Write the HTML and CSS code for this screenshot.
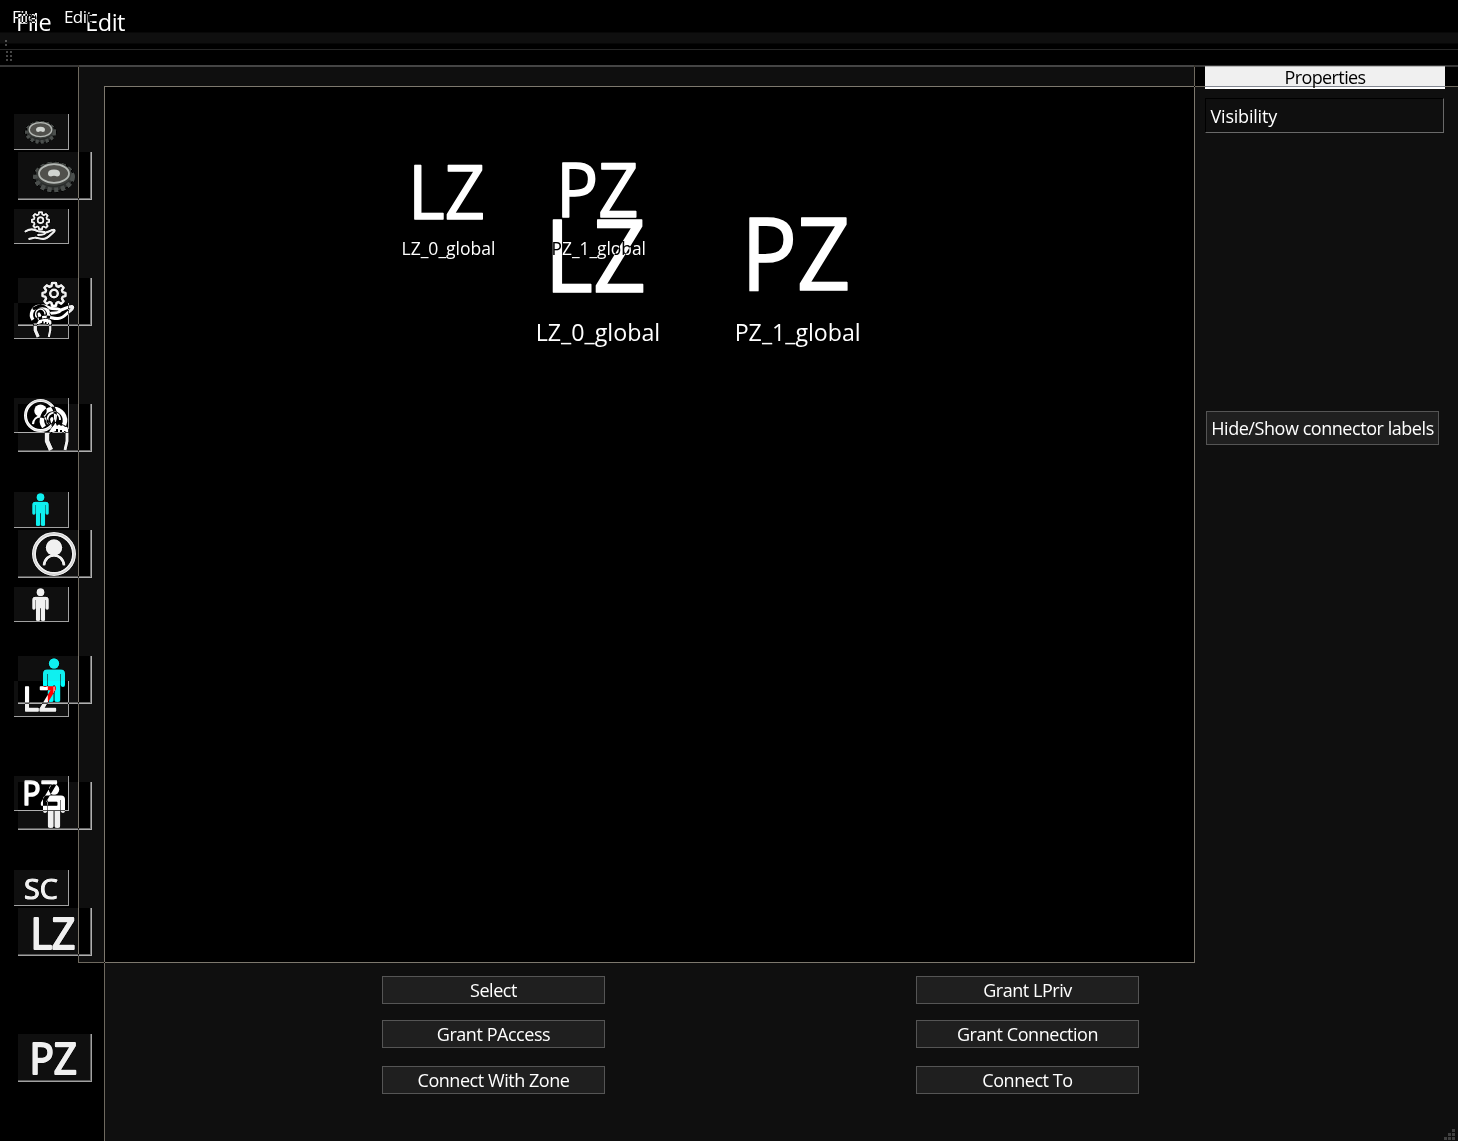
FILE: index.html
```html
<!DOCTYPE html>
<html lang="en">
<head>
<meta charset="utf-8">
<title>Zone Editor</title>
<link rel="stylesheet" href="styles.css">
</head>
<body>
<svg class="defs" aria-hidden="true">
  <symbol id="cog" viewBox="0 0 44 44">
    <ellipse cx="22" cy="23" rx="17" ry="11.500" fill="#303332" stroke="#3c3f3e" stroke-width="4"/>
    <ellipse cx="22" cy="23" rx="18.500" ry="13" fill="none" stroke="#5a5e5c" stroke-width="5" stroke-dasharray="4.200 2.600"/>
    <ellipse cx="22" cy="20" rx="16" ry="10.500" fill="#4c4c48" stroke="#4c4f4c" stroke-width="2.500"/>
    <ellipse cx="22" cy="19.500" rx="15" ry="9.300" fill="#5f5f5b" stroke="#c4c8c4" stroke-width="1.800"/>
    <path d="M16 19.500q0-4 6-4t6 4q0 3-3 3-3-1.500-6 0-3 0-3-3z" fill="#dfe3df"/>
  </symbol>
  <symbol id="service" viewBox="0 0 44 44">
    <g fill="none" stroke="#fff" stroke-width="2.500" stroke-linejoin="round" stroke-linecap="round">
      <path d="M20 3h4l.5 3 2 .9 2.700-1.600 2.400 2.400-1.700 2.600.8 2 2.800.6v3.200l-2.800.6-.8 2 1.700 2.600-2.400 2.300-2.700-1.600-2 .9-.5 2.800h-4l-.5-2.800-2-.9-2.700 1.600-2.400-2.300 1.700-2.600-.8-2-2.800-.6v-3.200l2.800-.6.8-2-1.700-2.600L14.800 5.300l2.700 1.600 2-.9z"/>
      <circle cx="22" cy="13.500" r="3.800"/>
      <path stroke-width="3" d="M2 28.500C8 24.500 13 25 18 28c4 1.500 9 0 10.500 2.300 0 2-3 2.700-9.500 3M29 30c4-1 8-4 11-3.500 3 1-3 5-5 7-3 3-6 5-9 5-5 .4-8-2-12-1.500-3 .3-4 1-7 1.500"/>
    </g>
  </symbol>
  <symbol id="touch" viewBox="0 0 44 44">
    <g fill="none" stroke="#fff">
      <path stroke-width="4.500" d="M12 21A11.500 11.500 0 1 1 32 19"/>
      <path stroke-width="1.800" d="M17 18A6.300 6.800 0 1 1 28 14"/>
      <path stroke-width="4.500" d="M15 26v9l4 9"/>
      <path stroke-width="3" d="M35 23v12l-2 9"/>
    </g>
    <path fill="#fff" d="M16 28l4-7-2-8q2-4 4 0l3 7q2-3 4 0 2-2 4 1 3-1 3 3v4h-2v-3h-2v2h-2v-3h-2v2h-2v-3h-2v2z"/>
  </symbol>
  <symbol id="account" viewBox="0 0 44 44">
    <circle cx="22" cy="22" r="20" fill="none" stroke="#fff" stroke-width="4"/>
    <circle cx="22" cy="22" r="20.300" fill="none" stroke="#aaa" stroke-width=".5"/>
    <circle cx="22" cy="15.500" r="8.300" fill="#fff"/>
    <path d="M12 33.500c1-13.500 19-13.500 20 0" fill="none" stroke="#fff" stroke-width="2.800"/>
  </symbol>
  <symbol id="person" viewBox="0 0 44 44">
    <circle cx="22" cy="5.500" r="5.200" fill="currentColor"/>
    <path fill="currentColor" d="M15 11.500h14q4 0 4 4V27q0 2-2 2t-2.300-2V16h-.5v26.500q0 1.500-2.800 1.500t-2.900-1.500V27h-.9v15.500q0 1.500-2.900 1.500t-2.900-1.500V16h-.5v11q-.3 2-2.300 2t-2-2V15.500q0-4 4-4z"/>
  </symbol>
  <symbol id="lz" viewBox="0 0 44 44"><text class="glyph" x="-1.600" y="38.500" textLength="45" lengthAdjust="spacingAndGlyphs">LZ</text></symbol>
  <symbol id="pz" viewBox="0 0 44 44"><text class="glyph" x="-2.500" y="37.500" textLength="47.500" lengthAdjust="spacingAndGlyphs">PZ</text></symbol>
  <symbol id="sc" viewBox="0 0 44 44"><text class="glyph glyph-sc" x="0" y="37.500" textLength="45" lengthAdjust="spacingAndGlyphs">SC</text></symbol>
</svg>

<main class="desktop">
  <section class="window small">
    <nav class="menu"><span>File</span><span>Edit</span></nav>
    <div class="toolbar"><i class="grip"></i></div>
    <div class="workspace">
      <aside class="palette">
        <button><svg><use href="#cog"/></svg></button>
        <button><svg><use href="#service"/></svg></button>
        <button><svg><use href="#touch"/></svg></button>
        <button><svg><use href="#account"/></svg></button>
        <button class="cyan"><svg><use href="#person"/></svg></button>
        <button><svg><use href="#person"/></svg></button>
        <button><svg><use href="#lz"/></svg></button>
        <button><svg><use href="#pz"/></svg></button>
        <button><svg><use href="#sc"/></svg></button>
      </aside>
      <div class="canvas">
        <svg class="scene" viewBox="79 65 1115 897">
          <text class="zone" x="408" y="218.500" textLength="77" lengthAdjust="spacingAndGlyphs">LZ</text>
          <text class="zone" x="556" y="217" textLength="82.500" lengthAdjust="spacingAndGlyphs">PZ</text>
          <text class="label" x="401.500" y="255" textLength="94" lengthAdjust="spacingAndGlyphs">LZ_0_global</text>
          <text class="label" x="551.500" y="255" textLength="94.500" lengthAdjust="spacingAndGlyphs">PZ_1_global</text>
        </svg>
      </div>
      <aside class="properties">
        <h2>Properties</h2>
        <div class="field">Visibility</div>
        <button class="action">Hide/Show connector labels</button>
      </aside>
      <div class="actions">
        <button class="action">Select</button>
        <button class="action">Grant LPriv</button>
        <button class="action">Grant PAccess</button>
        <button class="action">Grant Connection</button>
        <button class="action">Connect With Zone</button>
        <button class="action">Connect To</button>
      </div>
    </div>
    <svg class="resize" viewBox="0 0 11 11"><path fill="#414141" d="M8 0h3v3H8zM4 4h3v3H4zM8 4h3v3H8zM0 8h3v3H0zM4 8h3v3H4zM8 8h3v3H8z"/></svg>
  </section>

  <section class="window large">
    <nav class="menu"><span>File</span><span>Edit</span></nav>
    <div class="toolbar"><i class="grip"></i></div>
    <div class="workspace">
      <aside class="palette">
        <button><svg><use href="#cog"/></svg></button>
        <button><svg><use href="#service"/></svg></button>
        <button><svg><use href="#touch"/></svg></button>
        <button><svg><use href="#account"/></svg></button>
        <button class="cyan"><svg><use href="#person"/></svg></button>
        <button><svg><use href="#person"/></svg></button>
        <button><svg><use href="#lz"/></svg></button>
        <button><svg><use href="#pz"/></svg></button>
      </aside>
      <div class="canvas">
        <svg class="scene" viewBox="105 87 1353 1054">
          <text class="zone" x="544.500" y="291.500" textLength="101.500" lengthAdjust="spacingAndGlyphs">LZ</text>
          <text class="zone" x="741" y="289.500" textLength="109.500" lengthAdjust="spacingAndGlyphs">PZ</text>
          <text class="label" x="535.700" y="341" textLength="124.500" lengthAdjust="spacingAndGlyphs">LZ_0_global</text>
          <text class="label" x="734.700" y="341" textLength="126" lengthAdjust="spacingAndGlyphs">PZ_1_global</text>
        </svg>
      </div>
    </div>
  </section>
</main>
</body>
</html>
```
FILE: styles.css
```css
* { box-sizing: border-box; }
body {
  margin: 0;
  background: #000;
  color: #fff;
  font: 18px/24px "Open Sans", "Noto Sans", sans-serif;
}
button { font: inherit; color: inherit; margin: 0; padding: 0; }
.defs { position: absolute; width: 0; height: 0; }
.desktop {
  position: relative;
  width: 1458px;
  height: 1141px;
  overflow: hidden;
  isolation: isolate;
}
.window {
  width: 1458px;
  height: 1141px;
  display: flex;
  flex-direction: column;
  background: #0f0f0f;
}
/* The second window lies over the first and inverts against it. */
.large {
  position: absolute;
  top: 0;
  left: 0;
  mix-blend-mode: difference;
}
.menu { display: flex; background: #000; }
.small .menu {
  height: 33px;
  padding: 5px 0 0 12px;
  gap: 27px;
  font-size: 17px;
  letter-spacing: -0.5px;
  border-bottom: 1px solid #080808;
}
.large .menu {
  height: 44px;
  padding: 10px 0 0 16px;
  gap: 34px;
  font-size: 23.500px;
  letter-spacing: -0.5px;
  border-bottom: 1px solid #080808;
}
.toolbar { display: flex; }
.small .toolbar { height: 17px; border-bottom: 1px solid #363636; padding: 6px 0 0 4px; }
.large .toolbar { height: 23px; border-bottom: 2px solid #454545; padding: 6px 0 0 5px; }
.grip {
  background: radial-gradient(circle, #555 1px, transparent 1.300px) 0 0 / 4px 4px;
}
.small .grip { width: 3px; height: 8px; }
.large .grip { width: 7px; height: 11px; }
.workspace { display: grid; }
.small .workspace {
  height: 1091px;
  padding-top: 15px;
  grid-template-columns: 78px 1117px 263px;
  grid-template-rows: 898px 1fr;
}
.large .workspace { flex: 1; grid-template-columns: 104px 1fr; }
.palette {
  grid-row: 1 / -1;
  display: grid;
  align-content: start;
  align-items: center;
  justify-items: start;
}
.small .palette { padding: 19.750px 0 0 14px; grid-auto-rows: 94.500px; }
.large .palette { padding: 46px 0 0 18px; grid-auto-rows: 126px; }
.palette button {
  display: flex;
  align-items: center;
  justify-content: center;
  background: #000;
  border: 0 solid #b0b0b0;
  color: #fff;
}
.palette svg { flex: none; overflow: visible; }
.palette .cyan { color: #00ffff; }
.small .palette button {
  width: 55px;
  height: 36px;
  padding-right: 2px;
  border-width: 0 1px 1px 0;
}
.small .palette button:nth-child(even) { height: 35px; }
.small .palette svg { width: 33px; height: 33px; }
.large .palette button {
  width: 74px;
  height: 48px;
  padding-right: 2px;
  border-width: 0 1px 1px 0;
  box-shadow: inset -1px -1px #696969;
}
.large .palette svg { width: 44px; height: 44px; }
symbol { overflow: visible; }
.glyph { font-size: 44.500px; fill: #fff; stroke: #fff; stroke-width: 2.200px; stroke-linejoin: round; }
.glyph-sc { font-size: 37px; stroke-width: 1.600px; }
.canvas { background: #000; border: 1px solid #7d786e; }
.small .canvas { border-top: 0; }
.large .canvas { margin-top: 19px; border-right: 0; border-bottom: 0; }
.scene { display: block; width: 100%; height: 100%; }
.zone { fill: #fff; stroke: #fff; stroke-linejoin: round; }
.small .zone { font-size: 75.500px; stroke-width: 1.500px; }
.large .zone { font-size: 101.500px; stroke-width: 1.700px; }
.label { fill: #fff; }
.small .label { font-size: 18px; }
.large .label { font-size: 24px; }
.properties {
  padding: 1px 13px 0 10px;
  display: flex;
  flex-direction: column;
  align-items: flex-start;
}
.properties h2 {
  margin: 0;
  width: 240px;
  height: 23px;
  background: #fff;
  color: #0f0f0f;
  text-align: center;
  font-size: 18px;
  font-weight: 400;
  line-height: 22px;
  letter-spacing: -0.6px;
}
.field {
  width: 239px;
  height: 35px;
  margin-top: 9px;
  padding: 5px 5px 5px 4.500px;
  border: 1px solid;
  border-color: #000 #696969 #696969 #000;
  letter-spacing: -0.2px;
}
.action {
  background: #1f1f1f;
  border: 1px solid #555;
  letter-spacing: -0.450px;
  white-space: nowrap;
}
.properties .action { width: 233px; height: 34px; margin: 278px 0 0 1px; }
.actions {
  grid-column: 2 / -1;
  display: grid;
  grid-template-columns: 223px 223px;
  grid-template-rows: 44px 46px 28px;
  column-gap: 311px;
  padding: 13px 0 0 304px;
  align-content: start;
}
.actions .action { height: 28px; }
.resize { position: absolute; left: 1444px; top: 1129px; width: 11px; height: 11px; }
```
